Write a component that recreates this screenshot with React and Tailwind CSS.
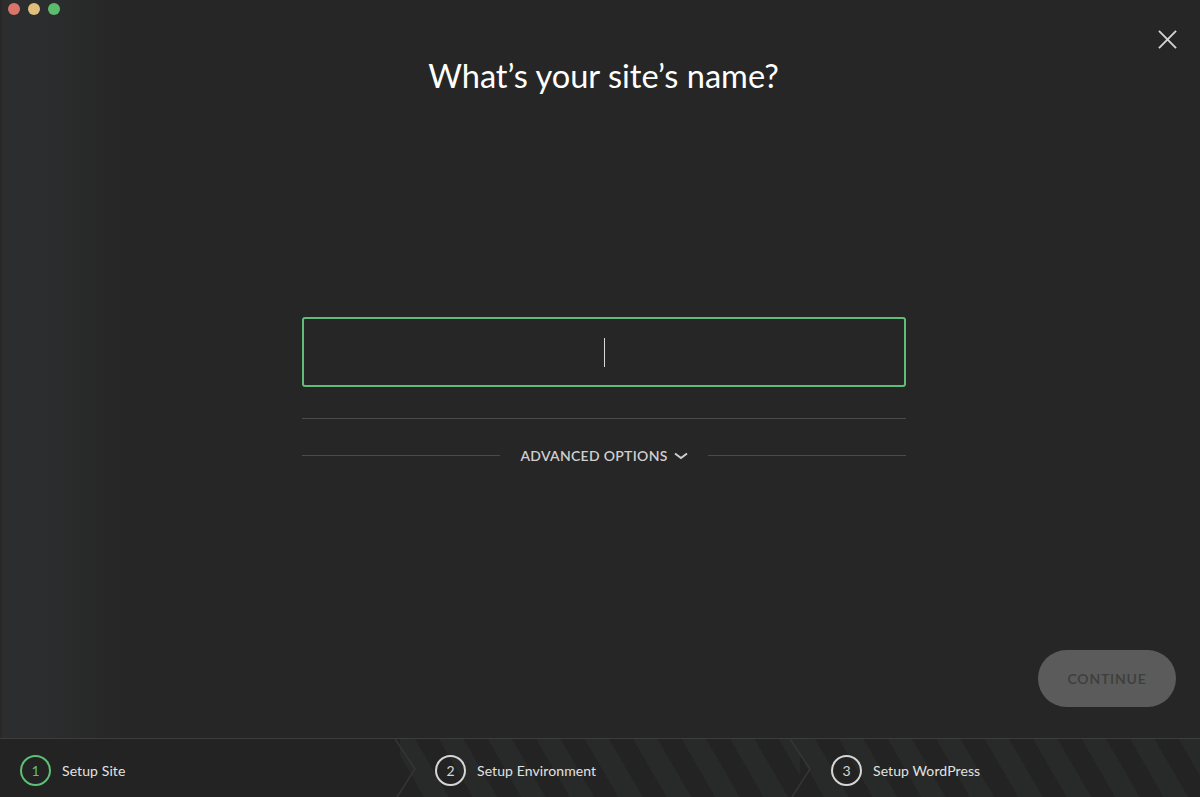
import React from 'react';

const font = { fontFamily: 'Lato, "Open Sans", sans-serif' };

function Step({ n, label, active, striped, pad }) {
  return (
    <div
      className={
        'relative w-[400px] shrink-0 flex items-center h-full pt-[4px] ' +
        (striped
          ? 'bg-[repeating-linear-gradient(60deg,#232323_0px,#232323_21px,#282929_21px,#282929_42px)] '
          : 'bg-[#232323] ') +
        pad
      }
    >
      <div
        className={
          'w-[31px] h-[31px] rounded-full border-2 flex items-center justify-center text-[14px] ' +
          (active ? 'border-[#5fbf75] text-[#5fbf75]' : 'border-[#d6d6d6] text-[#d6d6d6]')
        }
      >
        {n}
      </div>
      <span className="ml-[11px] text-[14px] tracking-[0.1px] text-[#e2e2e2]">{label}</span>
    </div>
  );
}

export default function App() {
  return (
    <div className="w-[1200px] h-[797px] flex flex-col overflow-hidden bg-[#262626]" style={font}>
      {/* window body */}
      <div className="relative flex-1 flex flex-col bg-[linear-gradient(to_right,#272727_0px,#2d2d2e_3px,#2c2d2e_40px,#262626_125px)]">
        {/* traffic lights */}
        <div className="absolute left-[8px] top-[3px] flex gap-[8px]">
          <span className="w-[12px] h-[12px] rounded-full bg-[#d9756b]" />
          <span className="w-[12px] h-[12px] rounded-full bg-[#dfbf7b]" />
          <span className="w-[12px] h-[12px] rounded-full bg-[#5cbc6d]" />
        </div>
        {/* close */}
        <button className="absolute right-[23px] top-[30px] w-[19px] h-[19px]">
          <svg viewBox="0 0 20 20" className="w-full h-full" stroke="#d4d4d4" strokeWidth="2" fill="none">
            <path d="M1 1L19 19M19 1L1 19" />
          </svg>
        </button>

        <h1 className="pt-[56px] pl-[7px] text-center text-white text-[32.6px] leading-[40px] font-normal">
          What’s your site’s name?
        </h1>

        <div className="w-[604px] ml-[302px] mt-[221px]">
          <div className="h-[70px] border-2 border-[#60bd78] rounded-[3px] flex items-center justify-center">
            <span className="w-px h-[29px] bg-[#d8d8d8]" />
          </div>
          <div className="mt-[31px] h-px bg-[#4b4b4b]" />
          <div className="mt-[26px] flex items-center gap-[20px]">
            <div className="flex-1 h-px bg-[#4b4b4b]" />
            <button className="flex items-center gap-[6px] text-[14px] font-semibold tracking-[0.3px] text-[#cfcfcf]">
              ADVANCED OPTIONS
              <svg viewBox="0 0 14 8" className="w-[14px] h-[8px]" fill="none" stroke="#cfcfcf" strokeWidth="2">
                <path d="M1 1.5L7 6L13 1.5" />
              </svg>
            </button>
            <div className="flex-1 h-px bg-[#4b4b4b]" />
          </div>
        </div>

        <div className="flex-1" />
        <div className="flex justify-end pr-[24px] pb-[31px]">
          <button className="w-[138px] h-[57px] rounded-full bg-[#5a5b5a] text-[#3d3e3d] text-[14px] font-semibold tracking-[0.8px]">
            CONTINUE
          </button>
        </div>
      </div>

      {/* steps bar */}
      <div className="relative h-[59px] flex border-t border-[#3d3d3d]">
        <Step n="1" label="Setup Site" active pad="pl-[20px]" />
        <Step n="2" label="Setup Environment" striped pad="pl-[35px]" />
        <Step n="3" label="Setup WordPress" striped pad="pl-[31px]" />
        <svg className="absolute inset-0 pointer-events-none" width="1200" height="58" fill="none" stroke="#353535" strokeWidth="1.5">
          <path d="M395 0L415 30L397 58" />
          <path d="M790 0L810 30L792 58" />
        </svg>
      </div>
    </div>
  );
}
